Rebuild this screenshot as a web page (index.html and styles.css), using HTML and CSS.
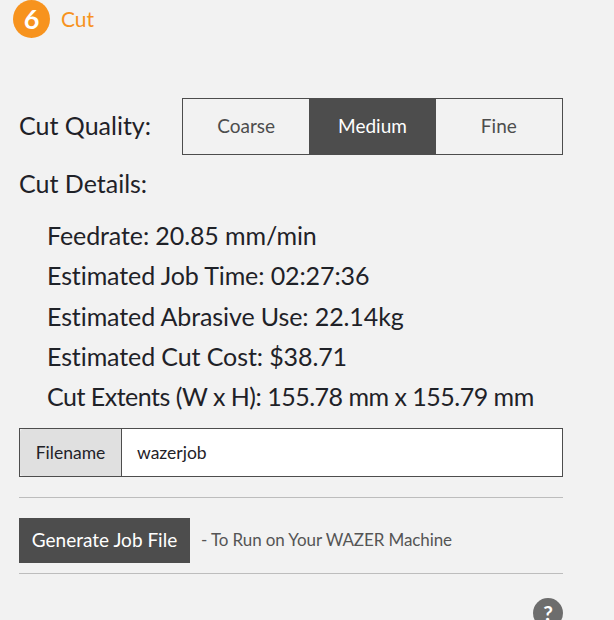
FILE: index.html
```html
<!DOCTYPE html>
<html lang="en">
<head>
    <meta charset="UTF-8">
    <title>Cut</title>
    <link rel="stylesheet" href="styles.css">
</head>
<body>
    <div class="step-head">
        <span class="step-num">6</span>
        <span class="step-title">Cut</span>
    </div>

    <div class="panel">
        <div class="quality-row">
            <span class="label">Cut Quality:</span>
            <div class="quality-btns">
                <span class="q-btn">Coarse</span>
                <span class="q-btn active">Medium</span>
                <span class="q-btn">Fine</span>
            </div>
        </div>

        <div class="label details-title">Cut Details:</div>
        <ul class="details">
            <li>Feedrate: 20.85 mm/min</li>
            <li>Estimated Job Time: 02:27:36</li>
            <li>Estimated Abrasive Use: 22.14kg</li>
            <li>Estimated Cut Cost: $38.71</li>
            <li class="tight">Cut Extents (W x H): 155.78 mm x 155.79 mm</li>
        </ul>

        <div class="file-row">
            <span class="file-label">Filename</span>
            <span class="file-input">wazerjob</span>
        </div>

        <div class="generate-row">
            <span class="generate-btn">Generate Job File</span>
            <span class="generate-note">- To Run on Your WAZER Machine</span>
        </div>

        <div class="help-row">
            <span class="help">?</span>
        </div>
    </div>
</body>
</html>
```

FILE: styles.css
```css
html, body {
    height: 100%;
    overflow: hidden;
}
body {
    margin: 0;
    background: #f2f2f2;
    font-family: 'Lato', sans-serif;
    color: #1f2228;
}
.step-head {
    display: flex;
    align-items: center;
    gap: 11px;
    padding: 0 0 0 13px;
    height: 38px;
}
.step-num {
    width: 37px;
    height: 38px;
    border-radius: 50%;
    background: #f7931e;
    color: white;
    font-size: 27px;
    font-weight: bold;
    text-align: center;
    line-height: 38px;
}
.step-title {
    color: #f7931e;
    font-size: 21px;
    padding-bottom: 2px;
}
.panel {
    width: 544px;
    margin-left: 19px;
    padding-top: 60px;
}
.quality-row {
    display: flex;
    align-items: center;
}
.label {
    font-size: 25px;
    line-height: 36px;
}
.quality-row .label {
    width: 163px;
    padding-bottom: 3px;
}
.quality-btns {
    display: flex;
    width: 381px;
    height: 57px;
    box-sizing: border-box;
    border: 1px solid #4d4d4d;
}
.q-btn {
    flex: 1;
    text-align: center;
    line-height: 53px;
    font-size: 19px;
    color: #4d4d4d;
}
.q-btn.active {
    background: #4d4d4d;
    color: white;
}
.details-title {
    margin-top: 10px;
}
.details {
    list-style: none;
    margin: 14px 0 0;
    padding: 0 0 0 28px;
}
.details li {
    font-size: 25px;
    letter-spacing: -0.1px;
    line-height: 40.3px;
    white-space: nowrap;
}
.details li.tight {
    letter-spacing: -0.5px;
}
.file-row {
    display: flex;
    height: 49px;
    margin-top: 12px;
    box-sizing: border-box;
    border: 1px solid #4d4d4d;
}
.file-label {
    width: 101px;
    background: #e0e0e0;
    border-right: 1px solid #4d4d4d;
    border-radius: 4px 0 0 4px;
    text-align: center;
    line-height: 47px;
    font-size: 17.5px;
}
.file-input {
    flex: 1;
    background: white;
    padding-left: 15px;
    line-height: 47px;
    font-size: 17.5px;
}
.generate-row {
    display: flex;
    align-items: center;
    gap: 11px;
    margin-top: 20px;
    padding: 20px 0 10px;
    border-top: 1px solid #bdbdbd;
    border-bottom: 1px solid #bdbdbd;
}
.generate-btn {
    background: #4d4d4d;
    color: white;
    font-size: 19px;
    width: 171px;
    text-align: center;
    height: 45px;
    line-height: 43px;
}
.generate-note {
    font-size: 17px;
    letter-spacing: -0.1px;
    color: #555;
    padding-bottom: 2px;
}
.help-row {
    display: flex;
    justify-content: flex-end;
    margin-top: 24px;
}
.help {
    width: 30px;
    height: 30px;
    border-radius: 50%;
    background: #6d6d6d;
    color: white;
    font-weight: bold;
    font-size: 21px;
    text-align: center;
    line-height: 30px;
}
```
